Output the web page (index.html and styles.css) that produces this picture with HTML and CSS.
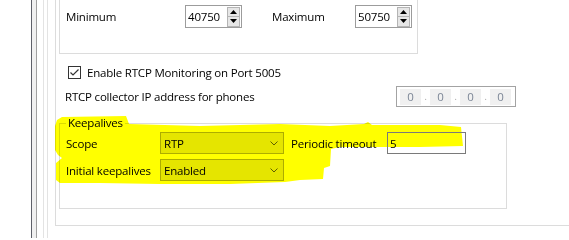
FILE: index.html
```html
<!DOCTYPE html>
<html>
<head>
<meta charset="utf-8">
<link rel="stylesheet" href="styles.css">
</head>
<body>
<div class="page">
  <div class="gutter"></div>
  <div class="splitter"></div>
  <div class="pane">
    <div class="pane-line">
      <div class="scroll">
        <div class="frame">
          <fieldset class="group group-ports">
            <legend>Media Port Range (UDP)</legend>
            <div class="range-row">
              <span class="lbl">Minimum</span>
              <div class="spin">
                <span class="spin-val">40750</span>
                <div class="spin-btns">
                  <span class="spin-btn"><svg width="7" height="4" viewBox="0 0 7 4"><path d="M0 4 L3.5 0 L7 4 Z" fill="#000"/></svg></span>
                  <span class="spin-btn"><svg width="7" height="4" viewBox="0 0 7 4"><path d="M0 0 L3.5 4 L7 0 Z" fill="#000"/></svg></span>
                </div>
              </div>
              <span class="lbl lbl-max">Maximum</span>
              <div class="spin">
                <span class="spin-val">50750</span>
                <div class="spin-btns">
                  <span class="spin-btn"><svg width="7" height="4" viewBox="0 0 7 4"><path d="M0 4 L3.5 0 L7 4 Z" fill="#000"/></svg></span>
                  <span class="spin-btn"><svg width="7" height="4" viewBox="0 0 7 4"><path d="M0 0 L3.5 4 L7 0 Z" fill="#000"/></svg></span>
                </div>
              </div>
            </div>
          </fieldset>

          <div class="check-row">
            <span class="checkbox"><svg width="11" height="11" viewBox="0 0 11 11"><path d="M1.5 5.5 L4 8 L9.5 2.5" fill="none" stroke="#333" stroke-width="1.2"/></svg></span>
            <span class="check-label">Enable RTCP Monitoring on Port 5005</span>
          </div>

          <div class="ip-row">
            <span class="ip-label">RTCP collector IP address for phones</span>
            <div class="ipbox">
              <span class="oct">0</span><span class="dot">.</span><span class="oct">0</span><span class="dot">.</span><span class="oct">0</span><span class="dot">.</span><span class="oct">0</span>
            </div>
          </div>

          <fieldset class="group group-keep">
            <legend>Keepalives</legend>
            <div class="keep-grid">
              <span class="lbl">Scope</span>
              <div class="combo"><span>RTP</span><svg class="chev" width="8" height="5" viewBox="0 0 8 5"><path d="M0.5 0.5 L4 4 L7.5 0.5" fill="none" stroke="#606060" stroke-width="1"/></svg></div>
              <span class="lbl lbl-timeout">Periodic timeout</span>
              <div class="textbox">5</div>
              <span class="lbl">Initial keepalives</span>
              <div class="combo"><span>Enabled</span><svg class="chev" width="8" height="5" viewBox="0 0 8 5"><path d="M0.5 0.5 L4 4 L7.5 0.5" fill="none" stroke="#606060" stroke-width="1"/></svg></div>
            </div>
          </fieldset>
        </div>
      </div>
    </div>
  </div>
  <svg class="marker" width="569" height="238" viewBox="0 0 569 238">
    <path d="M57 120 L62 117 L126 116 L129 124 L200 126 L280 124 L330 126 L364 124 L368 122 L372 125 L440 125 L461 127 L463 146 L420 147 L340 147 L331 149 L330 166 L324 168 L323 179 L300 180 L285 182 L230 184 L160 184 L100 183 L60 183 L56 180 L56 163 L62 158 L58 155 L55 150 L55 126 Z" fill="#ffff00"/>
  </svg>
</div>
</body>
</html>
```

FILE: styles.css
```css
html, body {
  margin: 0;
  padding: 0;
}
body {
  width: 569px;
  height: 238px;
  overflow: hidden;
  background: #ffffff;
  font-family: "Open Sans", "Segoe UI", sans-serif;
  font-size: 11.5px;
  letter-spacing: -0.2px;
  color: #000000;
}
.page {
  position: relative;
  display: flex;
  height: 238px;
}
.gutter {
  width: 31px;
  flex: none;
}
.splitter {
  width: 4px;
  flex: none;
  background: #f0f0f0;
  border-left: 1px solid #5e6069;
  border-right: 1px solid #a0a0a0;
}
.pane {
  flex: 1;
  display: flex;
  padding-left: 6px;
}
.pane-line {
  flex: 1;
  display: flex;
  border-left: 1px solid #e3e3e3;
  padding-left: 3px;
}
.scroll {
  flex: 1;
  display: flex;
  border-left: 1px solid #e3e3e3;
  padding-left: 7px;
}
.frame {
  flex: 1;
  display: flex;
  flex-direction: column;
  align-items: flex-start;
  height: 225px;
  border-left: 1px solid #dcdcdc;
  border-bottom: 1px solid #dcdcdc;
  padding-left: 3px;
}
.group {
  margin: 0;
  padding: 0;
  border: 1px solid #dcdcdc;
  min-width: 0;
  box-sizing: border-box;
}
.group legend {
  padding: 0 2px;
  margin-left: 6px;
  line-height: 16px;
}
.group-ports {
  margin-top: -15px;
  width: 359px;
  padding: 4px 0 25px 0;
}
.range-row {
  display: grid;
  grid-template-columns: 119px 57px 113px 57px;
  align-items: center;
  padding-left: 6px;
  height: 23px;
}
.lbl-max {
  padding-left: 30px;
}
.spin {
  box-sizing: border-box;
  width: 57px;
  height: 23px;
  border: 1px solid #9c9c9c;
  display: flex;
  align-items: center;
  padding: 1px 1px 1px 2px;
}
.spin-val {
  flex: 1;
}
.spin-btns {
  display: flex;
  flex-direction: column;
  width: 13px;
  height: 20px;
}
.spin-btn {
  flex: 1;
  display: flex;
  align-items: center;
  justify-content: center;
  background: #e6e6e6;
  border: 1px solid #b4b4b4;
}
.spin-btn + .spin-btn {
  border-top: none;
}
.check-row {
  display: flex;
  align-items: center;
  margin-top: 12px;
  margin-left: 9px;
  height: 13px;
}
.checkbox {
  box-sizing: border-box;
  width: 13px;
  height: 13px;
  border: 1px solid #333333;
  display: flex;
  align-items: center;
  justify-content: center;
}
.check-label {
  margin-left: 6px;
}
.ip-row {
  display: grid;
  grid-template-columns: 331px 120px;
  align-items: center;
  margin-top: 7px;
  padding-left: 6px;
  height: 21px;
}
.ipbox {
  box-sizing: border-box;
  width: 120px;
  height: 21px;
  border: 1px solid #a3a3a3;
  display: flex;
  align-items: center;
  padding: 0 4px 0 3px;
}
.oct {
  width: 21px;
  height: 16px;
  line-height: 16px;
  background: #f0f0f0;
  color: #7c8696;
  text-align: center;
}
.dot {
  width: 9px;
  text-align: center;
  color: #a0a0a0;
  font-size: 9px;
  line-height: 16px;
}
.group-keep {
  margin-top: 8px;
  width: 448px;
  padding: 1px 0 27px 0;
}
.keep-grid {
  display: grid;
  grid-template-columns: 94px 124px 103px 79px;
  grid-auto-rows: 22px;
  row-gap: 5px;
  align-items: center;
  padding-left: 6px;
}
.lbl-timeout {
  padding-left: 7px;
}
.combo {
  box-sizing: border-box;
  height: 22px;
  border: 1px solid #adadad;
  background: #e5e5e5;
  display: flex;
  align-items: center;
  justify-content: space-between;
  padding: 0 5px 0 3px;
}
.textbox {
  position: relative;
  z-index: 1;
  box-sizing: border-box;
  height: 22px;
  border: 1px solid #7a7a7a;
  background: transparent;
  display: flex;
  align-items: center;
  padding-left: 2px;
}
.marker {
  position: absolute;
  left: 0;
  top: 0;
  mix-blend-mode: multiply;
  pointer-events: none;
}
```
